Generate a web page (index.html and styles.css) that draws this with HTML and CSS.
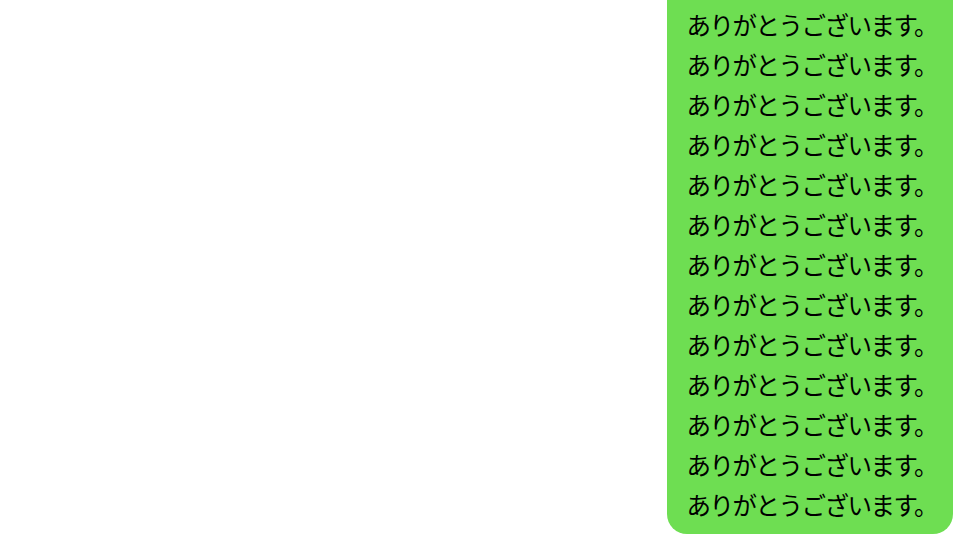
FILE: index.html
```html
<!DOCTYPE html>
<html lang="ja">
<head>
<meta charset="utf-8">
<link rel="stylesheet" href="styles.css">
</head>
<body>
<div class="chat">
  <div class="bubble">
    <p class="line">ありがとうございます。</p>
    <p class="line">ありがとうございます。</p>
    <p class="line">ありがとうございます。</p>
    <p class="line">ありがとうございます。</p>
    <p class="line">ありがとうございます。</p>
    <p class="line">ありがとうございます。</p>
    <p class="line">ありがとうございます。</p>
    <p class="line">ありがとうございます。</p>
    <p class="line">ありがとうございます。</p>
    <p class="line">ありがとうございます。</p>
    <p class="line">ありがとうございます。</p>
    <p class="line">ありがとうございます。</p>
    <p class="line">ありがとうございます。</p>
    <p class="line">ありがとうございます。</p>
    <p class="line">ありがとうございます。</p>
    <p class="line">ありがとうございます。</p>
  </div>
</div>
</body>
</html>
```
FILE: styles.css
```css
html, body {
  margin: 0;
  padding: 0;
  background: #ffffff;
}
.chat {
  height: 540px;
  overflow: hidden;
  display: flex;
  flex-direction: column;
  justify-content: flex-end;
  align-items: flex-end;
}
.bubble {
  flex-shrink: 0;
  margin: 0 7px 6px 0;
  padding: 0 16px 9px 19px;
  background: #6ede52;
  border-radius: 0 0 20px 20px;
  font-family: "Noto Sans CJK JP", sans-serif;
  font-size: 24.5px;
  letter-spacing: -1.5px;
  color: #000000;
}
.line {
  margin: 0;
  line-height: 40px;
  white-space: nowrap;
}
```
